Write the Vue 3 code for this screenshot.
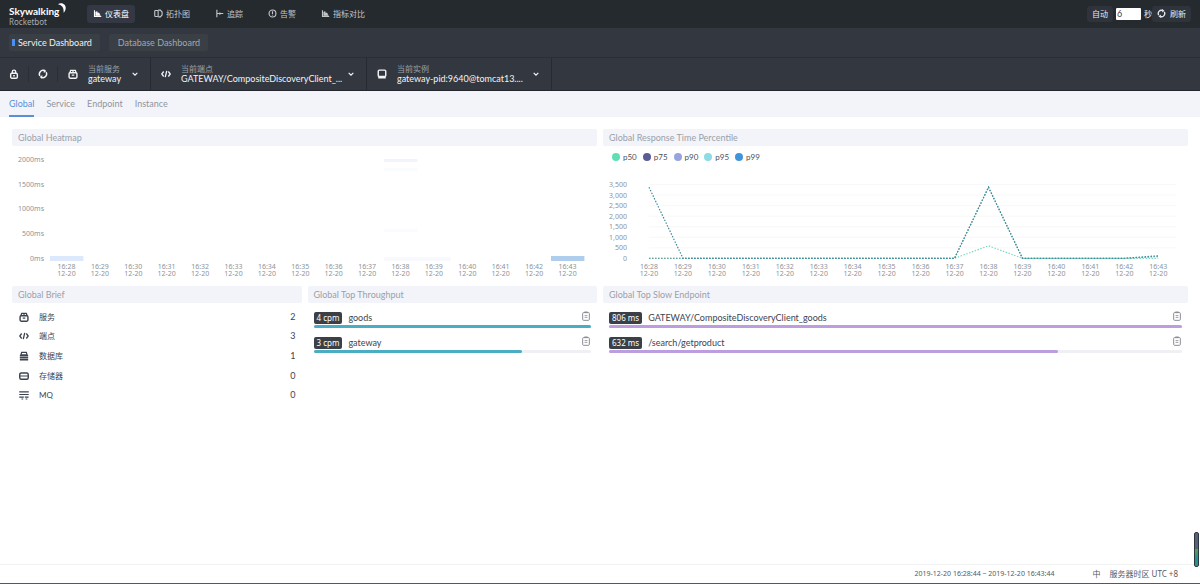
<script setup>
import { ref } from 'vue'

const nav = [
  { label: '仪表盘', icon: 'chart' },
  { label: '拓扑图', icon: 'topology' },
  { label: '追踪', icon: 'trace' },
  { label: '告警', icon: 'alarm' },
  { label: '指标对比', icon: 'chart' },
]
const activeNav = ref(0)
const seconds = ref('6')
const tabs = ['Global', 'Service', 'Endpoint', 'Instance']
const activeTab = ref('Global')

const selectors = [
  { id: 'service', label: '当前服务', value: 'gateway', icon: 'service' },
  { id: 'endpoint', label: '当前端点', value: 'GATEWAY/CompositeDiscoveryClient_...', icon: 'code' },
  { id: 'instance', label: '当前实例', value: 'gateway-pid:9640@tomcat13....', icon: 'instance' },
]

const brief = [
  { label: '服务', value: 2, icon: 'service' },
  { label: '端点', value: 3, icon: 'code' },
  { label: '数据库', value: 1, icon: 'database' },
  { label: '存储器', value: 0, icon: 'cache' },
  { label: 'MQ', value: 0, icon: 'mq' },
]

const throughput = [
  { badge: '4 cpm', name: 'goods', share: 100 },
  { badge: '3 cpm', name: 'gateway', share: 75 },
]
const slow = [
  { badge: '806 ms', name: 'GATEWAY/CompositeDiscoveryClient_goods', share: 100 },
  { badge: '632 ms', name: '/search/getproduct', share: 78.4 },
]

const times = Array.from({ length: 16 }, (_, i) => `16:${28 + i}`)

const heatX = (i) => 54.5 + i * 33.4
const heatLabels = ['2000ms', '1500ms', '1000ms', '500ms', '0ms']
const heatCells = [
  { i: 0, y: 110, h: 5, fill: '#dce8fb' },
  { i: 15, y: 110, h: 5, fill: '#afceee' },
  { i: 10, y: 13, h: 3, fill: '#f2f4fc' },
  { i: 10, y: 22, h: 3, fill: '#fafbfd' },
  { i: 10, y: 83, h: 3, fill: '#fafbfe' },
  { i: 10, y: 111, h: 4, fill: '#f8f9fd' },
  { i: 11, y: 111, h: 4, fill: '#f8f9fd' },
]

const lineX = (i) => 46 + i * 33.95
const lineY = (v) => 90.5 - (v / 3500) * 74
const lineLabels = ['3,500', '3,000', '2,500', '2,000', '1,500', '1,000', '500', '0']
const flat = (over) => times.map((_, i) => over[i] ?? 10)
const toPoints = (values) => values.map((v, i) => `${lineX(i)},${lineY(v)}`).join(' ')
const series = [
  { name: 'p50', color: '#5fe0b4', values: flat({ 10: 600 }) },
  { name: 'p75', color: '#5b5b95', values: flat({ 10: 3370, 15: 60 }) },
  { name: 'p90', color: '#97a4e0', values: flat({ 10: 3370, 15: 90 }) },
  { name: 'p95', color: '#8edbe3', values: flat({ 0: 3370, 10: 3370, 15: 120 }) },
  { name: 'p99', color: '#3f95dc', values: flat({ 0: 3370, 10: 3370, 15: 130 }) },
]
const drawn = [
  { color: '#7adcc0', values: series[0].values },
  { color: '#66a39d', values: series[2].values },
  { color: '#3c8c9b', values: series[4].values },
]

const icons = {
  chart: '<path d="M2 1.500v8.500h9" stroke-width="1.500"/><path d="M3.500 9V4l2-.800.700 2.500L8 5l1.800 4z" fill="currentColor" stroke-width=".500"/>',
  topology: '<rect x="1" y="2" width="4.500" height="8" rx="1"/><path d="M5.500 1.500h3l2.300 2.500v4L8.500 10.500h-3"/>',
  trace: '<path d="M2.500 1v10M2.500 6H11" stroke-width="1.500"/><path d="M6.500 4.500v3"/>',
  alarm: '<circle cx="6" cy="6" r="4.600"/><path d="M6 3v3.500M6 7.700v1"/>',
  refresh: '<path d="M2.300 8.200A4.300 4.300 0 0 1 7.600 2M9.700 3.800A4.300 4.300 0 0 1 4.400 10" stroke-width="1.800"/><path d="M6.800 0 10 2.300 7 4.800z M5.200 7.200 2 9.700 5 12z" fill="currentColor" stroke="none"/>',
  lock: '<rect x="2" y="5" width="8" height="6" rx="1.500" stroke-width="1.700"/><path d="M4 5V3.300a2 2 0 0 1 4 0V5M5 8h2" stroke-width="1.700"/>',
  service: '<rect x="1.300" y="4.500" width="9.400" height="6.500" rx="1.300" stroke-width="1.700"/><path d="M2.200 4.500 3.200 1.700h5.600l1 2.800M6 1.700v2.800M4.500 7.200h3"/>',
  code: '<path d="M3.200 3 .900 6l2.300 3M8.800 3l2.300 3-2.300 3M6.900 2.300 5.100 9.700" stroke-width="1.600"/>',
  instance: '<rect x="1.500" y="1.300" width="9" height="7.700" rx="1.300" stroke-width="1.700"/><path d="M1.500 10.500h9" stroke-width="1.800"/>',
  database: '<path d="M2.300 4.500 3.200 1.700h5.600l.900 2.800z"/><path d="M1 5.700h10M1 8.100h10M1 10.500h10" stroke-width="1.600"/>',
  cache: '<rect x=".900" y="2.300" width="10.200" height="7.600" rx="1.800" stroke-width="1.700"/><path d="M1 6h10" stroke-width="1.200"/>',
  mq: '<path d="M.300 2.200h11.400M.300 5.400h11.400M.300 8.600h5.500M7 8.600h4.500M3 10.800h2M8 10.800h2" stroke-width="1.400"/>',
  chevron: '<path d="M2.500 4.200 6 7.700l3.500-3.500" stroke-width="1.800"/>',
  clipboard: '<rect x="2" y="1.800" width="8" height="9.400" rx="1.200" stroke-width="1.200"/><path d="M4 1.600h4" stroke-width="2"/><path d="M4.300 5.500h3.400M4.300 7.700h3.400" stroke-width="1"/>',
}
</script>

<template>
  <div class="page">
    <header class="top">
      <a class="logo" href="#" aria-label="Skywalking Rocketbot">
        <span class="brand">Skywalking<svg class="moon" viewBox="0 0 9 10"><path d="M1 1.200C4-.8 8.700.8 8.700 5c0 2.200-1 3.800-2.200 4.700C7 6 6 2.200 1 1.200z" fill="#fff" /></svg></span>
        <span class="sub">Rocketbot</span>
      </a>
      <nav class="menu">
        <a v-for="(n, i) in nav" :key="n.label" href="#" :class="['item', { on: activeNav === i }]" @click.prevent="activeNav = i">
          <svg class="ic nine" viewBox="0 0 12 12" v-html="icons[n.icon]"></svg>{{ n.label }}
        </a>
      </nav>
      <div class="reload">
        <button type="button" class="chip">自动</button>
        <input id="seconds" v-model="seconds" type="text" class="secs" />
        <label for="seconds">秒</label>
        <button type="button" class="chip"><svg class="ic nine" viewBox="0 0 12 12" v-html="icons.refresh"></svg>刷新</button>
      </div>
    </header>

    <div class="boards">
      <button type="button" class="board current">Service Dashboard</button>
      <button type="button" class="board">Database Dashboard</button>
    </div>

    <div class="tools">
      <button type="button" class="tool" aria-label="lock"><svg class="ic ten" viewBox="0 0 12 12" v-html="icons.lock"></svg></button>
      <button type="button" class="tool" aria-label="refresh"><svg class="ic ten" viewBox="0 0 12 12" v-html="icons.refresh"></svg></button>
      <div v-for="s in selectors" :key="s.id" :class="['picker', s.id]">
        <svg class="ic ten" viewBox="0 0 12 12" v-html="icons[s.icon]"></svg>
        <div class="field">
          <label :for="s.id">{{ s.label }}</label>
          <select :id="s.id"><option>{{ s.value }}</option></select>
        </div>
        <svg class="ic eight" viewBox="0 0 12 12" v-html="icons.chevron"></svg>
      </div>
    </div>

    <nav class="tabs">
      <a v-for="t in tabs" :key="t" href="#" :class="{ on: activeTab === t }" @click.prevent="activeTab = t">{{ t }}</a>
    </nav>

    <main class="grid">
      <section class="wide">
        <h2>Global Heatmap</h2>
        <svg class="plot" viewBox="0 0 585 134">
          <rect v-for="(c, k) in heatCells" :key="k" :x="heatX(c.i) - 16.5" :y="c.y" width="33.4" :height="c.h" :fill="c.fill" />
          <text v-for="(l, k) in heatLabels" :key="l" x="32" :y="16 + k * 24.7" class="end">{{ l }}</text>
          <g v-for="(t, i) in times" :key="t" class="mid">
            <text :x="heatX(i)" y="123">{{ t }}</text>
            <text :x="heatX(i)" y="130">12-20</text>
          </g>
        </svg>
      </section>

      <section class="wide">
        <h2>Global Response Time Percentile</h2>
        <div class="legend">
          <button v-for="s in series" :key="s.name" type="button"><i :style="{ background: s.color }"></i>{{ s.name }}</button>
        </div>
        <svg class="plot" viewBox="0 0 585 112">
          <path v-for="k in 7" :key="k" :d="`M46 ${16.5 + (k - 1) * 10.57}H573`" stroke="#f8f8f9" />
          <text v-for="(l, k) in lineLabels" :key="l" x="24" :y="19 + k * 10.57" class="end">{{ l }}</text>
          <polyline v-for="(s, k) in drawn" :key="k" :points="toPoints(s.values)" :stroke="s.color" fill="none" stroke-width="1.2" stroke-dasharray="1.5 1.5" />
          <g v-for="(t, i) in times" :key="t" class="mid">
            <text :x="lineX(i)" y="101">{{ t }}</text>
            <text :x="lineX(i)" y="108">12-20</text>
          </g>
        </svg>
      </section>

      <section>
        <h2>Global Brief</h2>
        <ul class="brief">
          <li v-for="b in brief" :key="b.label">
            <svg class="ic ten" viewBox="0 0 12 12" v-html="icons[b.icon]"></svg>
            <span>{{ b.label }}</span><b>{{ b.value }}</b>
          </li>
        </ul>
      </section>

      <section>
        <h2>Global Top Throughput</h2>
        <ul class="rank teal">
          <li v-for="r in throughput" :key="r.name">
            <div class="line">
              <span class="badge">{{ r.badge }}</span><span class="name">{{ r.name }}</span>
              <button type="button" aria-label="copy"><svg class="ic ten" viewBox="0 0 12 12" v-html="icons.clipboard"></svg></button>
            </div>
            <div class="bar"><div :style="{ width: r.share + '%' }"></div></div>
          </li>
        </ul>
      </section>

      <section class="wide">
        <h2>Global Top Slow Endpoint</h2>
        <ul class="rank violet">
          <li v-for="r in slow" :key="r.name">
            <div class="line">
              <span class="badge">{{ r.badge }}</span><span class="name">{{ r.name }}</span>
              <button type="button" aria-label="copy"><svg class="ic ten" viewBox="0 0 12 12" v-html="icons.clipboard"></svg></button>
            </div>
            <div class="bar"><div :style="{ width: r.share + '%' }"></div></div>
          </li>
        </ul>
      </section>
    </main>

    <footer class="foot">
      <span class="range">2019-12-20 16:28:44 ~ 2019-12-20 16:43:44</span>
      <button type="button">中</button>
      <span>服务器时区 UTC +8</span>
    </footer>
    <div class="thumb"></div>
  </div>
</template>

<style>
body { margin: 0; }
</style>

<style scoped>
.page {
  position: relative;
  display: flex;
  flex-direction: column;
  min-height: 100vh;
  box-sizing: border-box;
  background: #fff;
  border-bottom: 1px solid #55595e;
  font: 9px/12px Lato, "Noto Sans CJK SC", sans-serif;
  color: #3d444f;
}
button, input, select { font: inherit; color: inherit; margin: 0; padding: 0; border: 0; background: none; }
a { color: inherit; text-decoration: none; }
ul { list-style: none; margin: 0; padding: 0; }
.ic { flex: none; fill: none; stroke: currentColor; stroke-width: 1.5; }
.eight { width: 8px; height: 8px; }
.nine { width: 9px; height: 9px; }
.ten { width: 10px; height: 10px; }

.top { display: flex; align-items: center; height: 28px; background: #252a2f; color: #d5d8dc; font-size: 8px; }
.logo { display: flex; flex-direction: column; width: 78px; padding: 2px 0 0 9px; }
.brand { position: relative; align-self: flex-start; font-weight: bold; font-size: 10px; line-height: 12px; color: #fff; }
.moon { position: absolute; left: 100%; top: -2px; width: 9px; height: 10px; margin-left: -2px; }
.sub { font-family: "Noto Sans", sans-serif; font-size: 8px; line-height: 9px; color: #a8adb3; }
.menu { display: flex; gap: 13px; padding-bottom: 1px; }
.item { display: flex; align-items: center; gap: 3px; height: 18px; padding: 0 6px; border-radius: 3px; color: #c3c7cc; }
.item.on { background: #333844; color: #fff; }
.reload { display: flex; align-items: center; margin-left: auto; padding: 0 9px 1px 0; color: #e6e8eb; }
.chip { display: flex; align-items: center; gap: 4px; height: 16px; padding: 0 5px; border-radius: 3px; background: #2e333c; }
.secs { width: 25px; height: 12px; box-sizing: border-box; margin: 0 3px; padding: 0 1px; background: #fff; border-radius: 1px; color: #444; font-size: 9px; }

.boards { display: flex; gap: 9px; align-items: center; height: 29px; padding: 0 9px; background: #333840; border-bottom: 1px solid #2a2f36; }
.board { position: relative; height: 17px; padding: 0 8px 0 9px; border-radius: 2px; background: #3a3f46; color: #a3a8ae; }
.current { color: #f0f1f3; }
.current::before { content: ""; position: absolute; left: 3px; top: 5px; width: 3px; height: 7px; background: #4a90f0; }

.tools { display: flex; height: 32px; background: #333840; border-bottom: 1px solid #23272d; color: #f2f3f5; }
.tool { display: flex; align-items: center; justify-content: center; align-self: center; width: 29px; height: 16px; box-sizing: border-box; border-right: 1px solid #2a2e35; }
.picker { display: flex; align-items: center; box-sizing: border-box; padding: 0 11px 0 10px; border-right: 1px solid #262a31; }
.service { width: 93px; }
.endpoint { width: 216px; }
.instance { width: 185px; }
.field { flex: 1; min-width: 0; display: flex; flex-direction: column; margin: 0 4px 0 10px; }
.field label { font-size: 8px; line-height: 10px; color: #9ca2aa; }
.field select { appearance: none; width: 100%; height: 10px; line-height: 10px; outline: none; }

.tabs { display: flex; gap: 12px; height: 26px; padding: 0 9px; background: #f3f4f9; color: #8f959e; }
.tabs a { line-height: 25px; height: 24px; border-bottom: 2px solid transparent; }
.tabs .on { color: #5a8fd8; border-color: #5a8fd8; }

.grid { flex: 1; display: grid; grid-template-columns: repeat(4, minmax(0, 1fr)); align-content: start; gap: 6px; padding: 12px; }
.wide { grid-column: span 2; }
h2 { margin: 0; padding: 0 6px; height: 17px; background: #f3f4f9; border-radius: 2px; font-weight: normal; font-size: 9px; line-height: 17px; color: #9aa0aa; }
.plot { display: block; width: 100%; }
.plot text { font-family: "Noto Sans", sans-serif; font-size: 7px; fill: #8e9399; }
.end { text-anchor: end; }
.mid { text-anchor: middle; }
.legend { display: flex; gap: 6px; height: 22px; padding-left: 9px; }
.legend button { display: flex; align-items: center; gap: 3px; font-size: 8px; color: #4a4f57; }
.legend i { width: 8px; height: 8px; border-radius: 50%; }

.brief { display: grid; grid-auto-rows: 1fr; height: 98px; padding: 4px 6px 0 7px; font-size: 8px; }
.brief li { display: flex; align-items: center; gap: 10px; }
.brief span { flex: 1; }
.brief b { font-weight: normal; font-size: 9px; }

.rank { display: grid; gap: 8px; padding: 8px 6px 0; }
.rank li { display: grid; gap: 1px; }
.line { display: flex; align-items: center; height: 13px; }
.badge { padding: 0 3px; height: 12px; line-height: 12px; border-radius: 2px; background: #3b4047; color: #fff; font-family: "Noto Sans", sans-serif; font-size: 8px; }
.name { flex: 1; margin-left: 6px; }
.line button { display: flex; align-self: flex-start; color: #8a8f96; }
.bar { height: 3px; border-radius: 2px; background: #eff0f3; }
.bar div { height: 3px; border-radius: 2px; }
.teal .bar div { background: #4badc4; }
.violet .bar div { background: #bb9de0; }

.foot { display: flex; align-items: center; justify-content: flex-end; height: 18px; padding: 0 22px; border-top: 1px solid #f0f1f3; font-family: "Noto Sans", "Noto Sans CJK SC", sans-serif; font-size: 8px; color: #555a61; }
.range { margin-right: 38px; font-size: 7px; }
.foot button { margin-right: 9px; }
.thumb { position: absolute; right: 1px; bottom: 16px; width: 5px; height: 35px; box-sizing: border-box; border: 1px solid #2c3640; border-radius: 2px; background: linear-gradient(#596079 50%, #5e9d4e 50%, #23938f 75%); }
</style>
